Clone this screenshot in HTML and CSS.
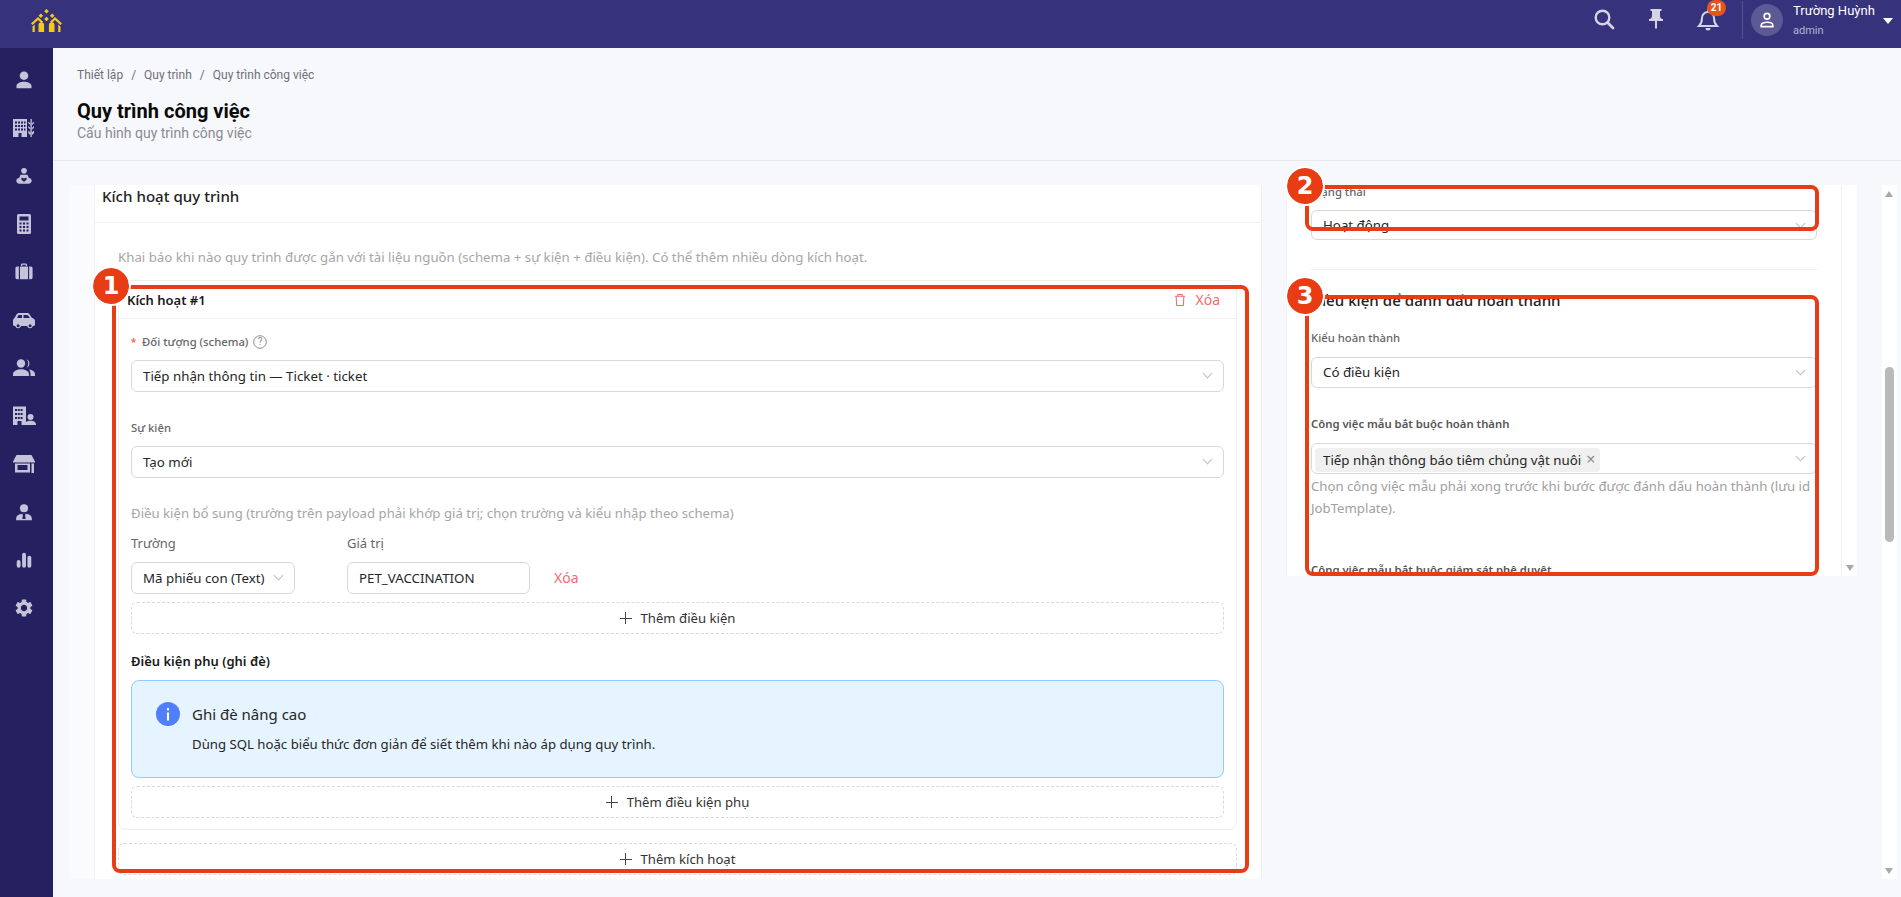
FILE: index.html
```html
<!DOCTYPE html>
<html lang="vi">
<head>
<meta charset="utf-8">
<title>Quy trình công việc</title>
<link rel="stylesheet" href="styles.css">
</head>
<body>
<header class="topbar">
  <div class="logo">
    <svg viewBox="0 0 32 24" width="32" height="24"><g fill="#f6c915"><path d="M15.500 0l2.300 2.300-2.300 2.300-2.300-2.300z"/><path d="M9.800 4.400l2.300 2.300-2.300 2.300-2.300-2.300zM21.200 4.400l2.300 2.300-2.300 2.300-2.300-2.300zM15.500 7.700l2.300 2.300-2.300 2.300-2.300-2.300z"/><path d="M0 14.500L7 8l5 4.800-1.500 1.500L7 11l-5.400 5z"/><path d="M31 14.500L24 8l-5 4.800 1.500 1.500L24 11l5.400 5z"/><path d="M1.500 17.500L3.800 15.500V23H1.500zM29.500 17.500L27.200 15.500V23h2.300z"/><path d="M7.500 16a2.800 2.800 0 0 1 5.600 0v7H7.500zM17.900 16a2.800 2.800 0 0 1 5.600 0v7h-5.600z"/></g></svg>
  </div>
  <div class="top-actions">
    <svg class="top-ico" viewBox="0 0 24 24" width="24" height="24"><circle cx="10.500" cy="10.500" r="6.800" fill="none" stroke="#d5d4e6" stroke-width="2.400"/><path d="M15.500 15.500l5.500 5.500" stroke="#d5d4e6" stroke-width="2.800" stroke-linecap="round"/></svg>
    <svg class="top-ico" viewBox="0 0 24 24" width="24" height="24"><path fill="#d5d4e6" d="M16 9V4h1.500V2h-11v2H8v5c0 1.700-1.300 3-3 3v2h6v7l1 1 1-1v-7h6v-2c-1.700 0-3-1.300-3-3z"/></svg>
    <div class="bell">
      <svg viewBox="0 0 24 24" width="24" height="24"><path fill="none" stroke="#d5d4e6" stroke-width="2" d="M12 4a6 6 0 0 0-6 6c0 5-2 7-3 8h18c-1-1-3-3-3-8a6 6 0 0 0-6-6z"/><path fill="#d5d4e6" d="M9.500 20h5a2.500 2.500 0 0 1-5 0zM11 1.500h2V4h-2z"/></svg>
      <span class="badge">21</span>
    </div>
    <div class="top-sep"></div>
    <div class="avatar"><svg viewBox="0 0 24 24" width="20" height="20"><circle cx="12" cy="7.500" r="3.400" fill="none" stroke="#fff" stroke-width="2"/><path d="M5 20v-1.500c0-2.500 3.500-3.800 7-3.800s7 1.300 7 3.800V20z" fill="none" stroke="#fff" stroke-width="2"/></svg></div>
    <div class="user">
      <div class="user-name">Trường Huỳnh</div>
      <div class="user-role">admin</div>
    </div>
    <span class="caret"></span>
  </div>
</header>

<div class="shell">
  <nav class="sidebar">
    <svg viewBox="0 0 24 24"><path d="M12 12c2.500 0 4.300-1.900 4.300-4.200S14.500 3.500 12 3.500 7.700 5.500 7.700 7.800 9.500 12 12 12zm0 1.800c-3.200 0-7.500 1.400-7.500 4.200v2.300h15V18c0-2.800-4.300-4.200-7.500-4.200z"/></svg>
    <svg viewBox="0 0 24 24"><path fill-rule="evenodd" d="M1 3h14v18H9.500v-4h-3v4H1zM3 5.500v2h2v-2zm3 0v2h2v-2zm3 0v2h2v-2zm3 0v2h1.500v-2zM3 9v2h2V9zm3 0v2h2V9zm3 0v2h2V9zm3 0v2h1.500V9zM3 12.500v2h2v-2zm3 0v2h2v-2zm3 0v2h2v-2zm3 0v2h1.500v-2z"/><path d="M18.500 3h1.300v18h-1.300zM16.300 5.500l2 1.800v1.700l-2-1.800zM22 5.500l-2 1.800V9l2-1.800zM16.300 10l2 1.800v1.700l-2-1.800zM22 10l-2 1.800v1.700l2-1.800zM16.300 14.500l2 1.800V19l-2-1.800zM22 14.500l-2 1.800V19l2-1.800z"/></svg>
    <svg viewBox="-2 -2 28 28"><circle cx="12" cy="6" r="3.300"/><path fill-rule="evenodd" d="M8 10.500h8l1.500 3.500c2 .5 3.500 1.800 3.500 3.500s-1.500 3.500-4 3.500H7c-2.500 0-4-1.700-4-3.500s1.500-3 3.500-3.500zM12 19l3-2.800c.8-1 0-2.200-1.100-2.200-.8 0-1.500.5-1.900 1.100-.4-.6-1.100-1.100-1.900-1.100-1.100 0-1.900 1.200-1.100 2.200z"/></svg>
    <svg viewBox="0 0 24 24"><path fill-rule="evenodd" d="M6.500 2h11A1.500 1.500 0 0 1 19 3.500v17a1.500 1.500 0 0 1-1.500 1.500h-11A1.500 1.500 0 0 1 5 20.500v-17A1.500 1.500 0 0 1 6.500 2zM7.500 4.500v4h9v-4zM7.500 10.500v2h2v-2zm3.500 0v2h2v-2zm3.500 0v2h2v-2zM7.500 14v2h2v-2zm3.500 0v2h2v-2zm3.500 0v2h2v-2zM7.500 17.500v2h2v-2zm3.500 0v2h2v-2zm3.500 0v2h2v-2z"/></svg>
    <svg viewBox="-2 -2 28 28"><path fill-rule="evenodd" d="M8.500 5V3.500C8.500 2.700 9.200 2 10 2h4c.8 0 1.500.7 1.500 1.500V5H8.500zM10 3.500V5h4V3.500zM4 5.500h2v15H4c-1.100 0-2-.9-2-2v-11c0-1.100.9-2 2-2zM7.300 5.500h9.400v15H7.300zM18 5.500h2c1.100 0 2 .9 2 2v11c0 1.100-.9 2-2 2h-2z"/></svg>
    <svg viewBox="0 0 24 24"><path fill-rule="evenodd" d="M7 5h8c1 0 2 .5 2.600 1.400L20 10c1.500.3 3 1.300 3 3v3.500c0 .8-.7 1.500-1.500 1.500h-.6a3 3 0 0 1-5.800 0H9a3 3 0 0 1-5.800 0H2.500C1.700 18 1 17.300 1 16.500V13c0-1.400.5-2.300 1.500-3l2-3.500C5 5.600 6 5 7 5zm-.5 2L5 10h5V7zm5 0v3h6.300l-1.600-2.500c-.3-.3-.7-.5-1.200-.5z M6.100 16.300a1.500 1.500 0 1 0 0 3 1.500 1.500 0 0 0 0-3zm12 0a1.500 1.500 0 1 0 0 3 1.500 1.500 0 0 0 0-3z"/></svg>
    <svg viewBox="0 0 24 24"><circle cx="9" cy="7.500" r="4.200"/><path d="M1 20v-1.800C1 15 5.500 13.200 9 13.200s8 1.800 8 5V20z"/><path d="M14.500 3.500a4.200 4.200 0 0 1 0 8c1.100-1 1.800-2.500 1.800-4s-.7-3-1.800-4zM17 13.500c3 .5 6 1.900 6 4.700V20h-4.500v-1.800c0-1.900-.6-3.500-1.500-4.700z"/></svg>
    <svg viewBox="0 0 24 24"><path fill-rule="evenodd" d="M1 2.500h13v18.500H9.500v-4h-4v4H1zM3 5v2h2V5zm2.800 0v2h2V5zm2.800 0v2h2V5zM3 9v2h2V9zm2.800 0v2h2V9zm2.800 0v2h2V9zM3 13v2h2v-2zm2.800 0v2h2v-2zm2.800 0v2h2v-2z"/><circle cx="18.500" cy="13" r="3"/><path d="M12.500 21c0-3 2.800-4.200 6-4.200s5.500 1.200 5.500 4.200z"/></svg>
    <svg viewBox="0 0 24 24"><path fill-rule="evenodd" d="M4.500 3h15L23 9.500v1H1v-1zM3 11.500h15v9H3zM5.500 13v5h10v-5zM19.500 11.500H22v9.500h-2.500z"/></svg>
    <svg viewBox="-1 -1 26 26"><circle cx="12" cy="8" r="4.400"/><path fill-rule="evenodd" d="M3.500 21v-2c0-3 3.500-4.800 6.500-5l.8 1.300-.6 4.200h3.600l-.6-4.200.8-1.300c3 .2 6.500 2 6.500 5v2z"/></svg>
    <svg viewBox="-2 -2 28 28"><rect x="3.500" y="12" width="4.500" height="9" rx="2.200"/><rect x="9.800" y="3.500" width="4.500" height="17.500" rx="2.200"/><rect x="16" y="7" width="4.500" height="14" rx="2.200"/></svg>
    <svg viewBox="-1.500 -1.500 27 27"><path d="M19.140 12.940c.04-.3.060-.61.060-.94 0-.32-.020-.64-.070-.94l2.030-1.580c.18-.14.230-.41.120-.61l-1.920-3.320c-.12-.22-.37-.29-.59-.22l-2.390.96c-.5-.38-1.030-.7-1.620-.94l-.36-2.540c-.04-.24-.24-.41-.48-.41h-3.840c-.24 0-.43.17-.47.41l-.36 2.540c-.59.24-1.130.57-1.620.94l-2.390-.96c-.22-.08-.47 0-.59.220L2.740 8.870c-.12.210-.08.47.12.61l2.030 1.580c-.05.3-.09.63-.09.94s.020.64.070.94l-2.030 1.580c-.18.14-.23.41-.12.61l1.920 3.320c.12.22.37.29.59.22l2.390-.96c.5.38 1.030.7 1.620.94l.36 2.540c.05.24.24.41.48.41h3.840c.24 0 .44-.17.47-.41l.36-2.540c.59-.24 1.130-.56 1.620-.94l2.390.96c.22.08.47 0 .59-.22l1.920-3.320c.12-.22.070-.47-.12-.61l-2.010-1.580zM12 15.600c-1.980 0-3.600-1.620-3.600-3.600s1.620-3.600 3.600-3.600 3.600 1.620 3.600 3.600-1.620 3.600-3.600 3.600z"/></svg>
  </nav>

  <main class="main">
    <section class="page-head">
      <div class="crumbs"><span>Thiết lập</span><span class="slash">/</span><span>Quy trình</span><span class="slash">/</span><span>Quy trình công việc</span></div>
      <h1 class="page-title">Quy trình công việc</h1>
      <p class="page-sub">Cấu hình quy trình công việc</p>
    </section>

    <section class="workspace">
      <div class="left-pane">
        <div class="card">
          <div class="card-head">Kích hoạt quy trình</div>
          <div class="card-body">
            <p class="intro">Khai báo khi nào quy trình được gắn với tài liệu nguồn (schema + sự kiện + điều kiện). Có thể thêm nhiều dòng kích hoạt.</p>
            <div class="trigger">
              <div class="trigger-head">
                <span class="trigger-title">Kích hoạt #1</span>
                <span class="danger del">
                  <svg viewBox="0 0 14 16" width="12" height="14"><path fill="none" stroke="#f56a6f" stroke-width="1.200" d="M1 3.500h12M4.500 3.500V1.500h5v2M2.500 3.500l.6 11h7.800l.6-11"/></svg>
                  Xóa
                </span>
              </div>
              <div class="trigger-body">
                <div class="label lab-first"><span class="req">*</span>Đối tượng (schema)<svg class="help" viewBox="0 0 14 14" width="14" height="14"><circle cx="7" cy="7" r="6.300" fill="none" stroke="#8c8c8c" stroke-width="1"/><text x="7" y="10.300" text-anchor="middle" class="help-q">?</text></svg></div>
                <div class="select"><span>Tiếp nhận thông tin — Ticket · ticket</span><i class="chev"></i></div>
                <div class="label lab-next">Sự kiện</div>
                <div class="select"><span>Tạo mới</span><i class="chev"></i></div>
                <p class="desc">Điều kiện bổ sung (trường trên payload phải khớp giá trị; chọn trường và kiểu nhập theo schema)</p>
                <div class="cond-row">
                  <div class="cond-field cond-a">
                    <div class="cond-label">Trường</div>
                    <div class="select"><span>Mã phiếu con (Text)</span><i class="chev"></i></div>
                  </div>
                  <div class="cond-field cond-b">
                    <div class="cond-label">Giá trị</div>
                    <div class="select input"><span>PET_VACCINATION</span></div>
                  </div>
                  <span class="danger cond-del">Xóa</span>
                </div>
                <div class="dash dash-a"><i class="plus"></i>Thêm điều kiện</div>
                <div class="sub-title">Điều kiện phụ (ghi đè)</div>
                <div class="alert">
                  <svg class="alert-ico" viewBox="0 0 24 24" width="24" height="24"><circle cx="12" cy="12" r="12" fill="#4f7ffa"/><rect x="11" y="10.500" width="2" height="8" fill="#fff"/><rect x="11" y="6" width="2" height="2.400" fill="#fff"/></svg>
                  <div>
                    <div class="alert-title">Ghi đè nâng cao</div>
                    <div class="alert-text">Dùng SQL hoặc biểu thức đơn giản để siết thêm khi nào áp dụng quy trình.</div>
                  </div>
                </div>
                <div class="dash dash-b"><i class="plus"></i>Thêm điều kiện phụ</div>
              </div>
            </div>
            <div class="dash dash-c"><i class="plus"></i>Thêm kích hoạt</div>
          </div>
        </div>
      </div>

      <div class="right-pane">
        <div class="right-card">
          <div class="label status-label">Trạng thái</div>
          <div class="select status-select"><span>Hoạt động</span><i class="chev"></i></div>
          <hr class="rule">
          <h2 class="section-title">Điều kiện để đánh dấu hoàn thành</h2>
          <div class="label kind-label">Kiểu hoàn thành</div>
          <div class="select compact"><span>Có điều kiện</span><i class="chev"></i></div>
          <div class="label strong job-label">Công việc mẫu bắt buộc hoàn thành</div>
          <div class="select compact multi"><span class="tag">Tiếp nhận thông báo tiêm chủng vật nuôi<b class="tag-x">×</b></span><i class="chev"></i></div>
          <p class="help-text">Chọn công việc mẫu phải xong trước khi bước được đánh dấu hoàn thành (lưu id JobTemplate).</p>
          <div class="label strong sup-label">Công việc mẫu bắt buộc giám sát phê duyệt</div>
        </div>
        <i class="arrow-down inner-arrow"></i>
      </div>

      <div class="scrollbar">
        <i class="arrow-up"></i>
        <div class="thumb"></div>
        <i class="arrow-down"></i>
      </div>
    </section>
  </main>
</div>

<div class="mark box-1"></div>
<div class="mark box-2"></div>
<div class="mark box-3"></div>
<div class="num num-1">1</div>
<div class="num num-2">2</div>
<div class="num num-3">3</div>
</body>
</html>
```
FILE: styles.css
```css
* { box-sizing: border-box; }
html, body { margin: 0; padding: 0; height: 100%; }
body {
  position: relative;
  width: 1901px;
  height: 897px;
  overflow: hidden;
  background: #f7f8fc;
  font-family: "Noto Sans", "Open Sans", sans-serif;
  font-size: 13.300px;
  color: #222;
}

/* top bar */
.topbar {
  height: 48px;
  background: #36327c;
  display: flex;
  align-items: flex-start;
  justify-content: space-between;
}
.logo { margin: 9px 0 0 31px; height: 24px; }
.top-actions { display: flex; align-items: flex-start; height: 48px; }
.top-ico { margin-top: 7px; margin-right: 28px; }
.bell { position: relative; margin-top: 8px; width: 24px; height: 24px; margin-right: 22px; }
.badge {
  position: absolute;
  left: 11px;
  top: -8px;
  width: 19px;
  height: 16px;
  border-radius: 8px;
  background: #e9541c;
  color: #fff;
  font: 700 10px/16px Roboto, sans-serif;
  text-align: center;
}
.top-sep { width: 1px; height: 38px; margin-top: 1px; background: #55518f; }
.avatar {
  width: 32px;
  height: 32px;
  border-radius: 50%;
  margin: 4px 10px 0 8px;
  background: #5d5994;
  display: flex;
  align-items: center;
  justify-content: center;
}
.user { width: 90px; padding-top: 2px; }
.user-name { font: 400 13px/18px Roboto, sans-serif; color: #fff; }
.user-role { font: 400 11px/18px Roboto, sans-serif; color: #b6b4d3; margin-top: 2px; }
.caret {
  margin-top: 18px;
  margin-right: 8px;
  width: 0;
  height: 0;
  border-left: 5px solid transparent;
  border-right: 5px solid transparent;
  border-top: 6px solid #fff;
}

/* shell */
.shell { display: flex; height: 849px; }
.sidebar {
  width: 53px;
  flex: none;
  background: #252160;
  display: flex;
  flex-direction: column;
  align-items: center;
  padding: 20px 6px 0 0;
  gap: 24px;
}
.sidebar svg { width: 24px; height: 24px; fill: #c4c3da; flex: none; }
.main { flex: 1; min-width: 0; }

/* page head */
.page-head { height: 113px; padding: 17px 0 0 24px; border-bottom: 1px solid #e6e8f0; }
.crumbs { font: 400 12px/20px Roboto, sans-serif; color: #6f6f78; display: flex; }
.slash { margin: 0 8px; }
.page-title { margin: 13px 0 0; font: 700 20px/26px Roboto, sans-serif; color: #0a0a0a; }
.page-sub { margin: 0; font: 400 14px/18px Roboto, sans-serif; color: #8a8a92; }

/* workspace */
.workspace { display: flex; height: 694px; margin-top: 24px; }
.left-pane { width: 1193px; margin-left: 16px; padding-left: 25px; background: #fbfbfd; overflow: hidden; flex: none; }
.card { background: #fff; border: 1px solid #eef0f3; border-top: 0; border-bottom: 0; height: 100%; }
.card-head {
  height: 38px;
  padding: 0 0 0 7px;
  font-size: 15.100px;
  font-weight: 500;
  line-height: 22px;
  border-bottom: 1px solid #f0f0f0;
}
.card-body { padding: 0 24px 0 23px; }
.intro { margin: 0; padding-top: 24px; height: 57px; font-size: 13.250px; line-height: 20px; color: #a6a6a6; }
.trigger { border: 1px solid #eeeeee; border-radius: 8px; height: 550px; }
.trigger-head {
  height: 38px;
  padding: 0 16px 0 8px;
  border-bottom: 1px solid #f0f0f0;
  display: flex;
  align-items: center;
  justify-content: space-between;
}
.trigger-title { font-size: 13px; font-weight: 600; color: #1a1a1a; }
.danger { color: #f56a6f; }
.del { display: flex; align-items: center; gap: 9px; font-size: 14px; }
.trigger-body { padding: 0 12px; }
.label { font-size: 11.300px; line-height: 20px; font-weight: 500; color: #666; }
.lab-first { padding-top: 13px; height: 41px; }
.lab-next { margin-top: 26px; height: 28px; padding-top: 0; }
.req { color: #ff4d4f; margin-right: 6px; font-family: Roboto, sans-serif; }
.help { vertical-align: -3px; margin-left: 5px; }
.help-q { font: 400 10px Roboto, sans-serif; fill: #8c8c8c; }
.select {
  position: relative;
  height: 32px;
  border: 1px solid #d9d9d9;
  border-radius: 6px;
  background: #fff;
  padding: 0 28px 0 11px;
  font-size: 13.300px;
  line-height: 30px;
  color: #262626;
  white-space: nowrap;
}
.input { padding-right: 11px; }
.chev {
  position: absolute;
  right: 12px;
  top: 9px;
  width: 7px;
  height: 7px;
  border-right: 1px solid #bfbfbf;
  border-bottom: 1px solid #bfbfbf;
  transform: rotate(45deg);
}
.desc { margin: 25px 0 0; font-size: 13.200px; line-height: 20px; color: #a6a6a6; }
.cond-row { display: flex; align-items: flex-end; margin-top: 10px; }
.cond-a { width: 164px; }
.cond-b { width: 183px; margin-left: 52px; }
.cond-label { font-size: 13px; line-height: 20px; height: 29px; color: #666; }
.cond-del { margin-left: 24px; font-size: 14px; line-height: 32px; }
.dash {
  height: 32px;
  border: 1px dashed #d9d9d9;
  border-radius: 6px;
  display: flex;
  align-items: center;
  justify-content: center;
  font-size: 13.150px;
  color: #333;
}
.dash-a { margin-top: 8px; }
.dash-b { margin-top: 8px; }
.dash-c { margin-top: 13px; }
.plus { position: relative; width: 12px; height: 12px; margin-right: 9px; }
.plus::before, .plus::after { content: ""; position: absolute; background: #444; }
.plus::before { left: 0; right: 0; top: 5.500px; height: 1px; }
.plus::after { top: 0; bottom: 0; left: 5.500px; width: 1px; }
.sub-title { margin-top: 17px; height: 29px; font-size: 13px; line-height: 20px; font-weight: 600; color: #1a1a1a; }
.alert {
  height: 98px;
  border: 1px solid #91caff;
  border-radius: 8px;
  background: #e6f4ff;
  padding: 19px 24px;
  display: flex;
  gap: 12px;
}
.alert-ico { flex: none; margin-top: 2px; }
.alert-title { font-size: 15px; line-height: 28px; color: #262626; }
.alert-text { margin-top: 5px; font-size: 13.200px; line-height: 22px; color: #262626; }

/* right pane */
.right-pane { position: relative; width: 571px; margin-left: 24px; background: #fff; overflow: hidden; height: 391px; flex: none; }
.right-card { width: 556px; height: 391px; padding: 0 24px; border-left: 1px solid #f3f3f6; border-right: 1px solid #eef0f3; overflow: hidden; }
.status-label { margin-top: -3px; height: 28px; }
.status-select { height: 30px; line-height: 28px; }
.rule { margin: 29px 0 0; height: 1px; border: 0; background: #f0f0f0; }
.section-title { margin: 18px 0 0; font-size: 15.100px; line-height: 24px; font-weight: 500; color: #222; }
.kind-label { margin-top: 16px; height: 29px; }
.job-label { margin-top: 26px; height: 29px; }
.strong { font-weight: 600; color: #555; }
.compact { height: 31px; line-height: 29px; }
.multi { padding: 2px 0 0 3px; }
.tag {
  display: inline-block;
  height: 24px;
  padding: 0 5px 0 8px;
  border-radius: 4px;
  background: #f0f0f0;
  line-height: 24px;
  font-size: 13.300px;
  color: #262626;
}
.tag-x { margin-left: 5px; font-weight: 400; color: #8c8c8c; font-size: 16px; line-height: 1; }
.help-text { margin: 1px 0 0; font-size: 13.200px; line-height: 22px; color: #a0a0a0; }
.sup-label { margin-top: 41px; }
.arrow-up, .arrow-down { display: block; width: 0; height: 0; border-left: 4px solid transparent; border-right: 4px solid transparent; }
.arrow-up { border-bottom: 6px solid #a8a8a8; }
.arrow-down { border-top: 6px solid #a8a8a8; }
.inner-arrow { position: absolute; right: 3px; bottom: 5px; }

/* page scrollbar */
.scrollbar {
  width: 15px;
  margin-left: 25px;
  background: #fff;
  position: relative;
  flex: none;
}
.scrollbar .arrow-up { position: absolute; left: 3px; top: 6px; }
.scrollbar .arrow-down { position: absolute; left: 3px; bottom: 5px; }
.thumb { position: absolute; left: 3px; top: 182px; width: 9px; height: 175px; border-radius: 5px; background: #b9b9b9; }

/* annotations drawn over the screenshot */
.mark { position: absolute; border: 4px solid #e73c14; border-radius: 8px; }
.box-1 { left: 112px; top: 285px; width: 1137px; height: 588px; }
.box-2 { left: 1305px; top: 185px; width: 514px; height: 46px; }
.box-3 { left: 1305px; top: 295px; width: 514px; height: 281px; }
.num {
  position: absolute;
  width: 36px;
  height: 36px;
  border-radius: 50%;
  background: #e73c14;
  outline: 2px solid #fff;
  color: #fff;
  font: 700 24px/36px "DejaVu Sans", sans-serif;
  text-align: center;
}
.num-1 { left: 93px; top: 268px; }
.num-2 { left: 1287px; top: 168px; }
.num-3 { left: 1287px; top: 278px; }
```
